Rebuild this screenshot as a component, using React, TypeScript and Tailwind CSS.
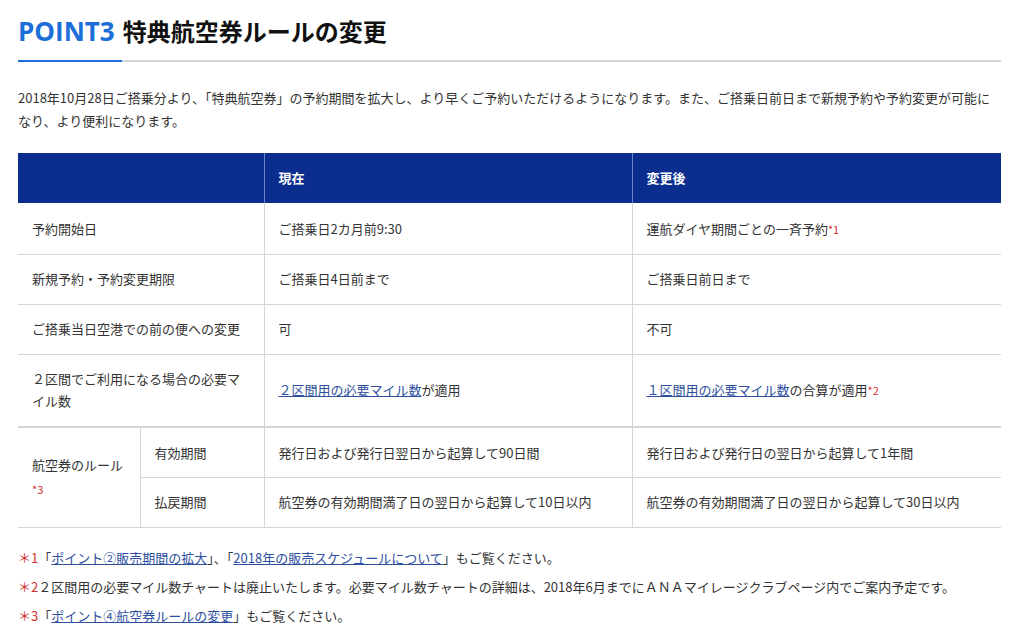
const font = { fontFamily: '"Noto Sans CJK JP", "Noto Sans", sans-serif' }

const Red = ({ children }: { children: React.ReactNode }) => (
  <span className="text-[11px] text-[#d0312d]">{children}</span>
)

const Link = ({ children }: { children: React.ReactNode }) => (
  <span className="text-[#2e4f9e] underline">{children}</span>
)

const td = 'border-b border-[#d6d6d6] px-[14px] align-middle'

export default function App() {
  return (
    <div style={font} className="h-[641px] w-[1024px] overflow-hidden bg-white text-[13px] text-[#333]">
      <div className="ml-[18px] w-[983px]">
        <div className="flex items-end gap-[8px] pt-[14px]">
          <span className="text-[26px] font-bold leading-[34px] text-[#1c6fd8]" style={{ fontFamily: '"Open Sans", sans-serif' }}>POINT3</span>
          <span className="text-[24px] font-bold leading-[34px] text-[#111]">特典航空券ルールの変更</span>
        </div>
        <div className="mt-[12px] flex h-[2px] bg-[#d4d4d4]">
          <div className="h-[2px] w-[104px] bg-[#1c6fd8]" />
        </div>
        <p className="mt-[24px] leading-[23px]">
          2018年10月28日ご搭乗分より、「特典航空券」の予約期間を拡大し、より早くご予約いただけるようになります。また、ご搭乗日前日まで新規予約や予約変更が可能になり、より便利になります。
        </p>
        <table className="mt-[21px] w-[983px] table-fixed border-collapse">
          <colgroup>
            <col className="w-[122px]" />
            <col className="w-[124px]" />
            <col className="w-[368px]" />
            <col className="w-[369px]" />
          </colgroup>
          <tbody>
            <tr className="h-[50px] bg-[#0b2e8e] font-bold text-white">
              <td colSpan={2} className="border-r border-[#6d84c4]" />
              <td className="border-r border-[#6d84c4] px-[14px]">現在</td>
              <td className="px-[14px]">変更後</td>
            </tr>
            <tr className="h-[51px]">
              <td colSpan={2} className={`${td} border-r`}>予約開始日</td>
              <td className={`${td} border-r`}>ご搭乗日2カ月前9:30</td>
              <td className={td}>運航ダイヤ期間ごとの一斉予約<Red>*1</Red></td>
            </tr>
            <tr className="h-[50px]">
              <td colSpan={2} className={`${td} border-r`}>新規予約・予約変更期限</td>
              <td className={`${td} border-r`}>ご搭乗日4日前まで</td>
              <td className={td}>ご搭乗日前日まで</td>
            </tr>
            <tr className="h-[50px]">
              <td colSpan={2} className={`${td} border-r`}>ご搭乗当日空港での前の便への変更</td>
              <td className={`${td} border-r`}>可</td>
              <td className={td}>不可</td>
            </tr>
            <tr className="h-[73px] leading-[22px]">
              <td colSpan={2} className={`${td} border-r`}>２区間でご利用になる場合の必要マイル数</td>
              <td className={`${td} border-r`}><Link>２区間用の必要マイル数</Link>が適用</td>
              <td className={td}><Link>１区間用の必要マイル数</Link>の合算が適用<Red>*2</Red></td>
            </tr>
            <tr className="h-[50px]">
              <td rowSpan={2} className={`${td} border-r border-t-2 leading-[24px]`}>
                航空券のルール
                <br />
                <Red>*3</Red>
              </td>
              <td className={`${td} border-r border-t-2`}>有効期間</td>
              <td className={`${td} border-r border-t-2`}>発行日および発行日翌日から起算して90日間</td>
              <td className={`${td} border-t-2`}>発行日および発行日の翌日から起算して1年間</td>
            </tr>
            <tr className="h-[50px]">
              <td className={`${td} border-r`}>払戻期間</td>
              <td className={`${td} border-r`}>航空券の有効期間満了日の翌日から起算して10日以内</td>
              <td className={td}>航空券の有効期間満了日の翌日から起算して30日以内</td>
            </tr>
          </tbody>
        </table>
        <div className="mt-[19px] flex flex-col gap-[7px] leading-[22px]">
          <div><span className="text-[#d0312d]">＊1</span>「<Link>ポイント②販売期間の拡大</Link>」、「<Link>2018年の販売スケジュールについて</Link>」もご覧ください。</div>
          <div><span className="text-[#d0312d]">＊2</span>２区間用の必要マイル数チャートは廃止いたします。必要マイル数チャートの詳細は、2018年6月までにＡＮＡマイレージクラブページ内でご案内予定です。</div>
          <div><span className="text-[#d0312d]">＊3</span>「<Link>ポイント④航空券ルールの変更</Link>」もご覧ください。</div>
        </div>
      </div>
    </div>
  )
}
